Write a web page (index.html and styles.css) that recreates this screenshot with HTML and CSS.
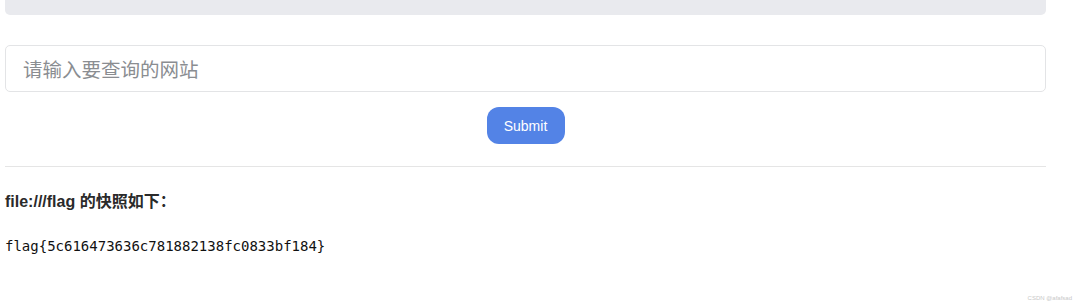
FILE: index.html
```html
<!DOCTYPE html>
<html lang="zh-CN">
<head>
  <meta charset="UTF-8">
  <meta name="viewport" content="width=device-width, initial-scale=1.0">
  <title>网站快照</title>
  <link rel="stylesheet" href="styles.css">
</head>
<body>
  <div class="content">
    <div class="top-bar"></div>

    <form class="query-form">
      <input class="query-input" type="text" placeholder="请输入要查询的网站">
      <button class="submit-button" type="button">Submit</button>
    </form>

    <hr class="divider">

    <div class="result">
      <h4 class="result-title">file:///flag 的快照如下：</h4>
      <pre class="result-body">flag{5c616473636c781882138fc0833bf184}</pre>
    </div>
  </div>
  <span class="watermark">CSDN @afafsad</span>
</body>
</html>
```

FILE: styles.css
```css
body, html {
  margin: 0;
  height: 100%;
  font-family: "Liberation Sans", "Noto Sans CJK SC", Arial, sans-serif;
  color: #212529;
  background: #fff;
}
.content {
  width: 1041px;
  margin-left: 5px;
}
.top-bar {
  height: 15px;
  background: #e9eaee;
  border-radius: 0 0 5px 5px;
}
.query-form {
  display: flex;
  flex-direction: column;
  align-items: center;
  margin-top: 30px;
}
.query-input {
  box-sizing: border-box;
  width: 100%;
  height: 47px;
  padding: 0 17px;
  border: 1px solid #e3e4e6;
  border-radius: 5px;
  font-family: "Noto Sans CJK SC", sans-serif;
  font-size: 19.5px;
  outline: none;
}
.query-input::placeholder {
  color: #8a8d91;
}
.submit-button {
  margin-top: 15px;
  width: 78px;
  height: 37px;
  border: none;
  border-radius: 12px;
  background: #5383e6;
  color: #fff;
  font-family: "Liberation Sans", Arial, sans-serif;
  font-size: 14px;
}
.divider {
  margin: 22px 0 0;
  border: none;
  border-top: 1px solid #e5e5e5;
}
.result-title {
  margin: 21px 0 0;
  font-size: 16px;
  font-weight: bold;
  color: #2a2a2a;
}
.result-body {
  margin: 26px 0 0;
  font-family: "DejaVu Sans Mono", monospace;
  font-size: 14px;
  color: #111;
}
.watermark {
  position: absolute;
  right: 8px;
  bottom: 4px;
  font-size: 6px;
  color: #c8c8c8;
}
```
